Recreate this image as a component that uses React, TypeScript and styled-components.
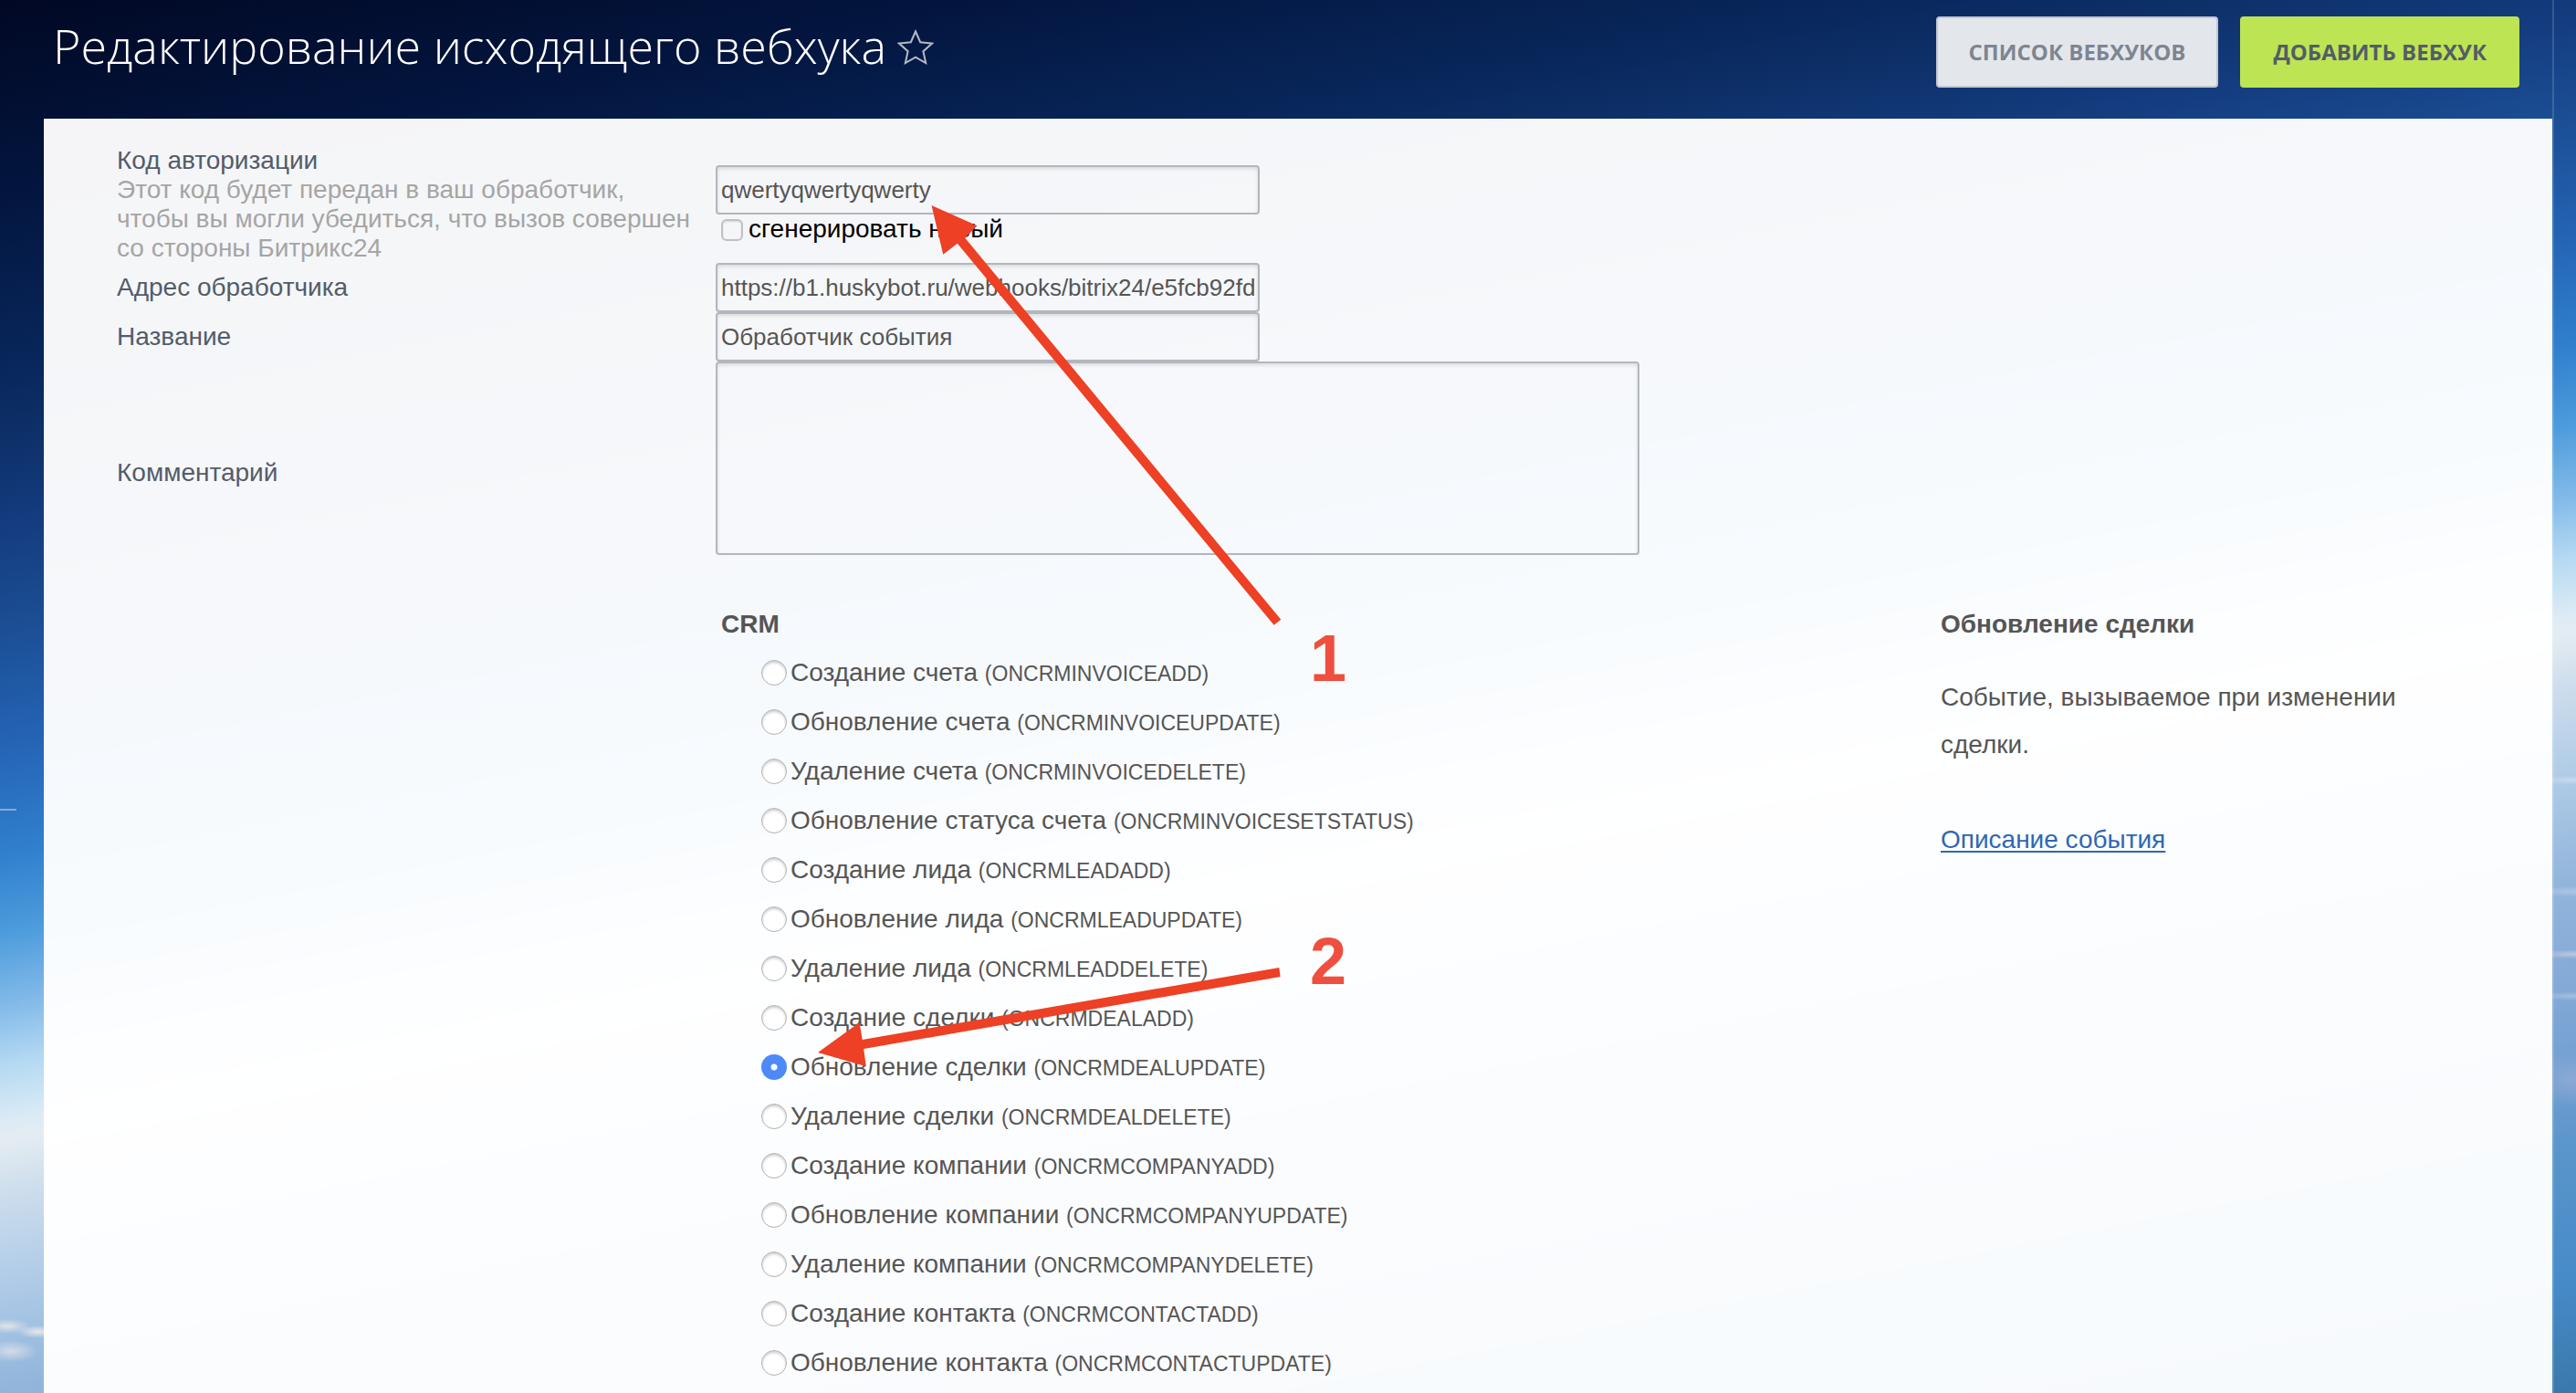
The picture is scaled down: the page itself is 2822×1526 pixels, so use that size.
import React from "react";
import styled, { createGlobalStyle } from "styled-components";

const sans = `"Liberation Sans", Arial, sans-serif`;
const display = `"Open Sans", sans-serif`;

const GlobalStyle = createGlobalStyle`
  *, *::before, *::after { box-sizing: border-box; }
  body { margin: 0; font-family: ${sans}; color: #535c69; }
`;

const Page = styled.div`
  position: relative;
  display: flex;
  flex-direction: column;
  min-height: 100vh;
  padding: 0 26px 0 48px;
  overflow: hidden;
  background:
    radial-gradient(26px 8px at 8px 95.2%, rgba(240, 236, 236, 0.8), transparent),
    radial-gradient(24px 7px at 42px 95.6%, rgba(240, 236, 236, 0.9), transparent),
    radial-gradient(30px 12px at 12px 97%, rgba(235, 232, 235, 0.7), transparent),
    radial-gradient(50px 5px at 100% 56%, rgba(220, 228, 240, 0.6), transparent),
    radial-gradient(50px 6px at 100% 64%, rgba(220, 225, 240, 0.4), transparent),
    radial-gradient(50px 5px at 100% 68.5%, rgba(215, 210, 225, 0.7), transparent),
    radial-gradient(50px 5px at 100% 71.5%, rgba(205, 215, 235, 0.5), transparent),
    radial-gradient(60px 30px at 100% 77.5%, rgba(170, 180, 215, 0.5), transparent),
    linear-gradient(
      168.8deg,
      #010824 0%, #03153e 10%, #08265a 19%, #0d3068 23%, #133a7c 27%, #1b4e94 33%,
      #2463b4 39%, #3080ce 45%, #4c9bdc 49%, #84bbe9 53%, #b4d9f2 56%, #dcebf5 59%,
      #e4ecf2 60%, #cbdcec 63%, #b2cde8 67%, #92b5dc 73%, #82a8d6 79%, #6c9dd0 84%,
      #5a95cb 87%, #468bc8 94%, #3a78ab 100%
    );
`;

const Header = styled.header`
  display: flex;
  align-items: flex-start;
  justify-content: space-between;
  height: 130px;
  padding: 18px 36px 0 10px;
`;

const TitleGroup = styled.div`
  display: flex;
  align-items: center;
  gap: 12px;
`;

const Title = styled.h1`
  margin: 0;
  font: 300 52px/64px ${display};
  color: #fff;
`;

const StarButton = styled.button`
  display: flex;
  padding: 4px 0 0;
  border: 0;
  background: none;
  color: #b4bac4;
`;

const Actions = styled.div`
  display: flex;
  gap: 24px;
`;

const ActionButton = styled.button<{ $primary?: boolean }>`
  height: 78px;
  padding: 0 34px;
  border: 2px solid ${(p) => (p.$primary ? "#bde453" : "#c2c8d0")};
  border-radius: 4px;
  background: ${(p) => (p.$primary ? "#bde453" : "#e3e7eb")};
  color: ${(p) => (p.$primary ? "#535c69" : "#7d8592")};
  font: 700 24px/32px ${display};
  text-transform: uppercase;
`;

const Panel = styled.main`
  flex: 1;
  padding: 30px 96px 0 80px;
  background: rgba(255, 255, 255, 0.96);
`;

const FormRow = styled.div`
  display: grid;
  grid-template-columns: 656px 1fr;
  align-items: center;
  font-size: 28px;
  line-height: 32px;
`;

const Caption = styled.label`
  color: #535c69;
`;

const Hint = styled.p`
  margin: 0;
  color: #a5a5a5;
`;

const TextInput = styled.input`
  display: block;
  width: 596px;
  height: 54px;
  padding: 0 4px;
  border: 2px solid #b2b6bd;
  border-radius: 4px;
  background: transparent;
  box-shadow: inset 0 2px 4px rgba(0, 0, 0, 0.12);
  color: #555;
  font: 26px/32px ${sans};
`;

const TextArea = styled.textarea`
  display: block;
  width: 1012px;
  height: 212px;
  margin-bottom: 32px;
  border: 2px solid #b2b6bd;
  border-radius: 4px;
  background: transparent;
  box-shadow: inset 0 2px 4px rgba(0, 0, 0, 0.12);
  resize: none;
  font: 26px/32px ${sans};
`;

const CheckLabel = styled.label`
  display: flex;
  align-items: center;
  gap: 6px;
  padding-left: 6px;
  color: #000;
`;

const CheckBox = styled.input`
  appearance: none;
  width: 24px;
  height: 24px;
  margin: 2px 0 0;
  border: 2px solid #bfc1c4;
  border-radius: 6px;
  box-shadow: inset 0 1px 2px rgba(0, 0, 0, 0.12);
`;

const EventSection = styled.section`
  display: flex;
  justify-content: space-between;
  padding: 18px 0 0 662px;
`;

const Events = styled.fieldset`
  min-width: 0;
  margin: 0;
  padding: 0;
  border: 0;
  color: #555;
`;

const GroupTitle = styled.legend`
  padding: 0;
  font: 700 28px/52px ${sans};
`;

const EventLabel = styled.label`
  display: flex;
  align-items: center;
  gap: 4px;
  height: 54px;
  padding-left: 44px;
  font-size: 28px;
  white-space: pre;
`;

const Radio = styled.input`
  appearance: none;
  flex: none;
  width: 28px;
  height: 28px;
  margin: 0;
  border: 1px solid #b0b2b5;
  border-radius: 50%;
  background: #fff;
  box-shadow: inset 0 2px 3px rgba(0, 0, 0, 0.2);

  &:checked {
    border: 0;
    background: radial-gradient(circle, #fff 0 3px, #4d8af7 4px);
    box-shadow: none;
  }
`;

const EventCode = styled.span`
  font-size: 23px;
`;

const Details = styled.aside`
  width: 574px;
  color: #555;
  font-size: 28px;
  line-height: 52px;
`;

const DetailsTitle = styled.h2`
  margin: 0 0 28px;
  font: 700 28px/52px ${sans};
`;

const DetailsText = styled.p`
  margin: 0 0 52px;
`;

const DocLink = styled.a`
  color: #2f67b2;
  text-decoration: underline;
  text-decoration-thickness: 2px;
  text-underline-offset: 3px;
`;

const Guide = styled.div`
  position: absolute;
  top: 0;
  right: 0;
  width: 26px;
  height: 100%;
  border-left: 2px solid rgba(255, 255, 255, 0.15);
`;

const SideMark = styled.div`
  position: absolute;
  top: 886px;
  left: 0;
  width: 18px;
  height: 2px;
  background: rgba(255, 255, 255, 0.4);
`;

const Arrows = styled.svg`
  position: absolute;
  top: 0;
  left: 0;
  width: 1500px;
  height: 1200px;
  pointer-events: none;
  fill: #ed4025;
`;

const StepNumber = styled.span<{ $top: number }>`
  position: absolute;
  top: ${(p) => p.$top}px;
  left: 1435px;
  color: #ee4f3e;
  font: 700 72px/80px ${sans};
`;

const events: [string, string][] = [
  ["Создание счета", "ONCRMINVOICEADD"],
  ["Обновление счета", "ONCRMINVOICEUPDATE"],
  ["Удаление счета", "ONCRMINVOICEDELETE"],
  ["Обновление статуса счета", "ONCRMINVOICESETSTATUS"],
  ["Создание лида", "ONCRMLEADADD"],
  ["Обновление лида", "ONCRMLEADUPDATE"],
  ["Удаление лида", "ONCRMLEADDELETE"],
  ["Создание сделки", "ONCRMDEALADD"],
  ["Обновление сделки", "ONCRMDEALUPDATE"],
  ["Удаление сделки", "ONCRMDEALDELETE"],
  ["Создание компании", "ONCRMCOMPANYADD"],
  ["Обновление компании", "ONCRMCOMPANYUPDATE"],
  ["Удаление компании", "ONCRMCOMPANYDELETE"],
  ["Создание контакта", "ONCRMCONTACTADD"],
  ["Обновление контакта", "ONCRMCONTACTUPDATE"],
];

export default function App() {
  return (
    <>
      <GlobalStyle />
      <Page>
        <Guide />
        <SideMark />
        <Header>
          <TitleGroup>
            <Title>Редактирование исходящего вебхука</Title>
            <StarButton type="button" aria-label="В избранное">
              <svg width="40" height="40" viewBox="0 0 40 40" fill="none" stroke="currentColor" strokeWidth="2">
                <path d="M20 2.500L25.200 14.200L38 15.600L28.400 24.200L31.200 37L20 30.600L8.800 37L11.600 24.200L2 15.600L14.800 14.200Z" />
              </svg>
            </StarButton>
          </TitleGroup>
          <Actions>
            <ActionButton type="button">Список вебхуков</ActionButton>
            <ActionButton type="button" $primary>Добавить вебхук</ActionButton>
          </Actions>
        </Header>
        <Panel>
          <FormRow>
            <div>
              <Caption htmlFor="code">Код авторизации</Caption>
              <Hint>
                Этот код будет передан в ваш обработчик,<br />
                чтобы вы могли убедиться, что вызов совершен<br />
                со стороны Битрикс24
              </Hint>
            </div>
            <div>
              <TextInput id="code" defaultValue="qwertyqwertyqwerty" />
              <CheckLabel>
                <CheckBox type="checkbox" />
                сгенерировать новый
              </CheckLabel>
            </div>
          </FormRow>
          <FormRow>
            <Caption htmlFor="url">Адрес обработчика</Caption>
            <TextInput id="url" defaultValue="https://b1.huskybot.ru/webhooks/bitrix24/e5fcb92fd" />
          </FormRow>
          <FormRow>
            <Caption htmlFor="name">Название</Caption>
            <TextInput id="name" defaultValue="Обработчик события" />
          </FormRow>
          <FormRow>
            <Caption htmlFor="comment">Комментарий</Caption>
            <TextArea id="comment" />
          </FormRow>
          <EventSection>
            <Events>
              <GroupTitle>CRM</GroupTitle>
              {events.map(([name, code]) => (
                <EventLabel key={code}>
                  <Radio type="radio" name="event" value={code} defaultChecked={code === "ONCRMDEALUPDATE"} />
                  <span>{name} <EventCode>({code})</EventCode></span>
                </EventLabel>
              ))}
            </Events>
            <Details>
              <DetailsTitle>Обновление сделки</DetailsTitle>
              <DetailsText>Событие, вызываемое при изменении сделки.</DetailsText>
              <DocLink href="#event">Описание события</DocLink>
            </Details>
          </EventSection>
        </Panel>
        <Arrows viewBox="0 0 1500 1200" aria-hidden="true">
          <path d="M1020.500 225L1070.500 247.300L1057.300 260.700L1403.300 678.700L1395.600 684.700L1048.800 266.700L1033.200 278.700Z" />
          <path d="M896 1153L941.600 1120L944.700 1139L1401.300 1060L1402.600 1070L946.200 1149L948.800 1168.300Z" />
        </Arrows>
        <StepNumber $top={681}>1</StepNumber>
        <StepNumber $top={1013}>2</StepNumber>
      </Page>
    </>
  );
}
